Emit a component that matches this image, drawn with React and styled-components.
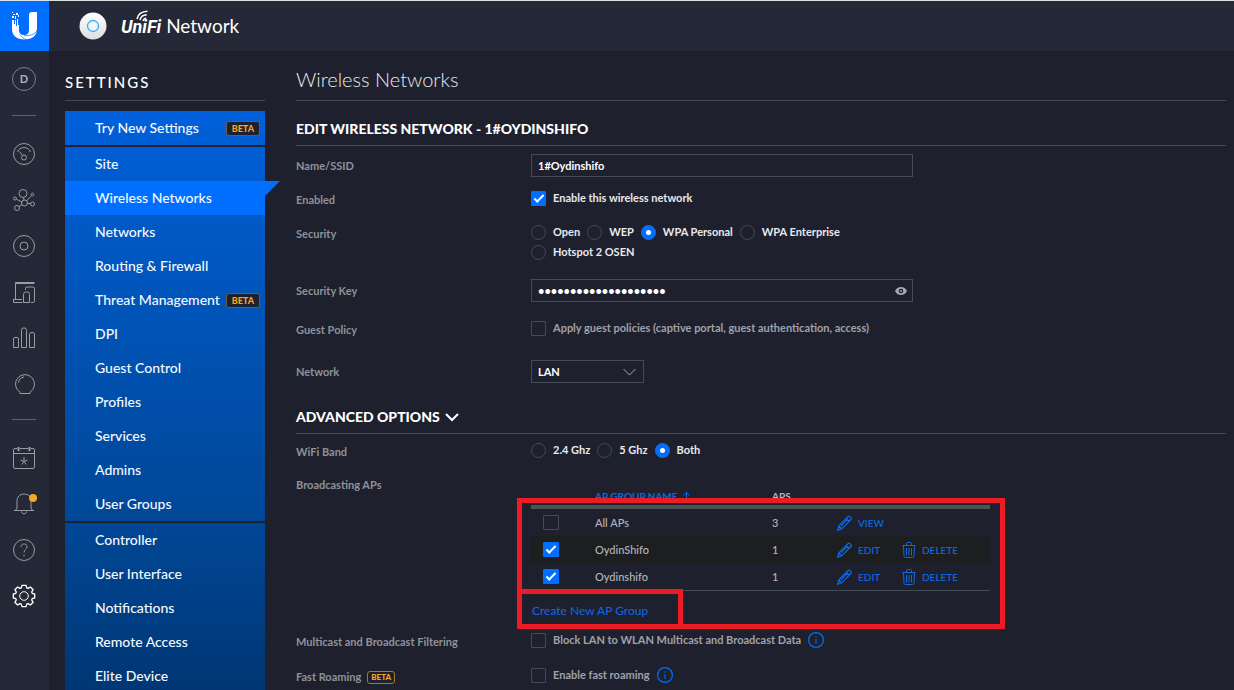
import React, { useState } from 'react';
import styled, { createGlobalStyle, css } from 'styled-components';

const colors = {
  page: '#1e202e',
  bar: '#252836',
  line: '#434c54',
  blue: '#006fff',
  link: '#0a6be6',
  text: '#e8e9ec',
  muted: '#8f9299',
  icon: '#9a9da6',
  orange: '#f5a623',
  red: '#ed1c24',
};

const GlobalStyle = createGlobalStyle`
  *, *::before, *::after {
    box-sizing: border-box;
  }
  body {
    margin: 0;
    background: ${colors.page};
    color: ${colors.text};
    font-family: Lato, 'Open Sans', sans-serif;
    font-size: 11px;
    line-height: 20px;
  }
  button, input, select {
    font: inherit;
    color: inherit;
    margin: 0;
  }
  a {
    color: inherit;
    text-decoration: none;
  }
`;

const StyledShell = styled.div`
  display: flex;
  height: 100vh;
  overflow: hidden;
  border-top: 1px solid #dbe2e4;
`;

const StyledRail = styled.nav`
  display: flex;
  flex-direction: column;
  flex: none;
  width: 49px;
  background: ${colors.bar};
`;

const StyledLogo = styled.a`
  display: grid;
  place-items: center;
  width: 49px;
  height: 50px;
  background: ${colors.blue};
`;

const StyledAvatar = styled.button`
  width: 24px;
  height: 24px;
  margin: 16px 12px 0;
  padding: 0;
  border: 1px solid #7b7e89;
  border-radius: 50%;
  background: none;
  color: #b0b2b9;
  font-size: 11px;
  font-weight: 700;
  line-height: 20px;
`;

const StyledRailLine = styled.hr`
  width: 24px;
  height: 1px;
  margin: ${props => (props.$near ? 12 : 24)}px 12px 15px;
  border: 0;
  background: #5c5f6b;
`;

const StyledRailLink = styled.a`
  display: grid;
  place-items: center;
  width: 48px;
  height: 46px;
  color: ${props => (props.$active ? '#ffffff' : colors.icon)};

  svg {
    width: 24px;
    height: 24px;
    fill: none;
    stroke: currentColor;
    overflow: visible;
  }
`;

const StyledMain = styled.div`
  display: flex;
  flex: 1;
  flex-direction: column;
  min-width: 0;
`;

const StyledHeader = styled.header`
  display: flex;
  align-items: center;
  flex: none;
  height: 50px;
  padding-left: 30px;
  background: ${colors.bar};
`;

const StyledBrand = styled.div`
  display: flex;
  align-items: baseline;
  gap: 5px;
  margin-left: 14px;
  color: #ffffff;
  font-size: 19px;
  line-height: 28px;
`;

const StyledUnifi = styled.span`
  position: relative;
  font-family: Roboto, Lato, sans-serif;
  font-size: 18px;
  font-style: italic;
  font-weight: 700;

  svg {
    position: absolute;
    top: -3px;
    left: 15px;
  }
`;

const StyledColumns = styled.div`
  display: flex;
  flex: 1;
  gap: 31px;
  min-height: 0;
  padding: 0 8px 0 16px;
`;

const StyledAside = styled.aside`
  flex: none;
  width: 200px;
`;

const StyledAsideTitle = styled.h2`
  margin: 0 0 10px;
  padding: 19px 0 6px;
  border-bottom: 1px solid ${colors.line};
  color: #ffffff;
  font-size: 15px;
  font-weight: 500;
  line-height: 24px;
  letter-spacing: 2px;
`;

const StyledMenu = styled.div`
  background: linear-gradient(#0060dc, #005bcb 80px, #004899 400px, #003673);
`;

const StyledMenuGroup = styled.ul`
  margin: 0;
  padding: 0;
  list-style: none;

  & + & {
    border-top: 2px solid ${colors.page};
  }
`;

const StyledMenuLink = styled.a`
  position: relative;
  display: flex;
  align-items: center;
  justify-content: space-between;
  height: 34px;
  padding: 0 5px 0 30px;
  color: #f6f9fd;
  font-size: 14px;
  font-weight: 500;
  white-space: nowrap;

  ${props =>
    props.$active &&
    css`
      background: ${colors.blue};

      &::after {
        content: '';
        position: absolute;
        top: 0;
        left: 100%;
        border-top: 15px solid ${colors.blue};
        border-right: 15px solid transparent;
      }
    `};
`;

const StyledBeta = styled.span`
  display: inline-block;
  padding: 0 ${props => (props.$small ? '3px' : '5px')};
  border: 1px solid ${props => (props.$small ? '#a8762a' : '#6e5a46')};
  border-radius: 3px;
  background: ${colors.page};
  color: ${colors.orange};
  font-size: ${props => (props.$small ? '8px' : '9px')};
  font-weight: 900;
  line-height: ${props => (props.$small ? '11px' : '13px')};
`;

const StyledContent = styled.main`
  flex: 1;
  min-width: 0;
`;

const StyledPageTitle = styled.h1`
  margin: 0 0 16px;
  padding: 13px 0 6px;
  border-bottom: 1px solid ${colors.line};
  font-size: 20px;
  font-weight: 300;
  line-height: 30px;
`;

const StyledSectionTitle = styled.h3`
  display: flex;
  align-items: center;
  gap: 5px;
  margin: 0;
  padding-bottom: 4px;
  border-bottom: 1px solid ${colors.line};
  color: #ffffff;
  font-size: 14px;
  font-weight: 900;
  line-height: 24px;
`;

const StyledRow = styled.div`
  display: grid;
  grid-template-columns: 235px 1fr;
  align-items: start;
  height: ${props => props.$height || 34}px;
  padding-top: ${props => (props.$tight ? 6 : 8)}px;
`;

const StyledRowLabel = styled.label`
  display: flex;
  align-items: center;
  gap: 6px;
  padding-top: 2px;
  color: ${colors.muted};
  font-weight: 700;
`;

const StyledField = styled.div`
  position: relative;
  width: ${props => props.$width || 382}px;
  max-width: 100%;
  height: 23px;

  > svg {
    position: absolute;
    top: 50%;
    right: 8px;
    transform: translateY(-50%);
    pointer-events: none;
  }
`;

const boxed = css`
  display: block;
  width: 100%;
  height: 23px;
  padding: 0 6px;
  border: 1px solid ${colors.line};
  border-radius: 0;
  background: ${colors.page};
  color: #ffffff;
  font-weight: 700;
  outline: none;
`;

const StyledInput = styled.input`
  ${boxed};
`;

const StyledSelect = styled.select`
  ${boxed};
  appearance: none;
`;

const StyledEye = styled.button`
  position: absolute;
  top: 0;
  right: 6px;
  display: grid;
  place-items: center;
  height: 23px;
  padding: 0;
  border: 0;
  background: none;
  color: #a4a6ad;
`;

const StyledOptions = styled.div`
  display: flex;
  flex-wrap: wrap;
  align-items: center;
  column-gap: 7px;
  max-width: 382px;
`;

const StyledOption = styled.label`
  display: flex;
  align-items: center;
  gap: 7px;
  color: ${props => (props.$dim ? '#a0a2a9' : colors.text)};
  font-weight: 700;
  white-space: nowrap;
`;

const StyledCheckbox = styled.input.attrs({ type: 'checkbox' })`
  appearance: none;
  display: grid;
  place-content: center;
  flex: none;
  width: ${props => (props.$large ? 16 : 15)}px;
  height: 15px;
  border: 1px solid ${colors.line};
  border-radius: 1px;

  &:checked {
    border-color: ${colors.blue};
    background: ${colors.blue};
  }
  &:checked::after {
    content: '';
    width: 10px;
    height: 5px;
    border: solid #ffffff;
    border-width: 0 0 2px 2px;
    transform: translateY(-1px) rotate(-45deg);
  }
`;

const StyledRadio = styled.input.attrs({ type: 'radio' })`
  appearance: none;
  display: grid;
  place-content: center;
  flex: none;
  width: 15px;
  height: 15px;
  border: 1px solid ${colors.line};
  border-radius: 50%;

  &:checked {
    border-color: #1f6fce;
    background: ${colors.blue};
  }
  &:checked::after {
    content: '';
    width: 5px;
    height: 5px;
    border-radius: 50%;
    background: #ffffff;
  }
`;

const StyledInfo = styled.button`
  display: grid;
  padding: 0;
  border: 0;
  background: none;
  color: ${colors.blue};
`;

const StyledGroups = styled.div`
  position: relative;
  width: 459px;
`;

const StyledTable = styled.table`
  width: 100%;
  border-collapse: separate;
  border-spacing: 0;
  table-layout: fixed;
  border-bottom: 1px solid ${colors.line};
  color: #b4b6bb;

  th {
    height: 36px;
    padding: 14px 0 0;
    border-bottom: 4px solid #4a5355;
    color: #b4b6bb;
    font-size: 10px;
    font-weight: 700;
    line-height: 18px;
    text-align: left;
  }
  td {
    height: 27px;
    padding: 0;
    font-weight: 500;
  }
  td:first-child {
    padding-left: 12px;
  }
  tbody tr:nth-child(even) {
    background: #1c1e20;
  }
`;

const StyledSort = styled.button`
  display: flex;
  align-items: center;
  gap: 5px;
  padding: 0;
  border: 0;
  background: none;
  color: ${colors.link};
  line-height: 18px;
`;

const StyledAction = styled.button`
  display: flex;
  align-items: center;
  gap: 6px;
  padding: 0;
  border: 0;
  background: none;
  color: ${colors.link};
  font-size: 10px;
`;

const StyledCreate = styled.a`
  display: block;
  margin-top: 10px;
  padding-left: 1px;
  color: ${colors.link};
  font-size: 12px;
`;

// Red frame laid over the AP group list
const StyledFrame = styled.div`
  position: absolute;
  top: ${props => (props.$inner ? 116 : 25)}px;
  left: -14px;
  width: ${props => (props.$inner ? 166 : 488)}px;
  height: ${props => (props.$inner ? 40 : 131)}px;
  border: 5px solid ${colors.red};
  pointer-events: none;
`;

const LogoIcon = () => (
  <svg width="28" height="30" viewBox="0 0 28 30" fill="#fff" aria-hidden="true">
    <path d="M1 1h1v1H1zM5 2h2v2H5zM2 3h2v1H2zM1 5h2v2H1zM4 5h1v3H4zM7 4h1v2H7z" />
    <path d="M1 9h2v4h1V9h1v6h1V8h1v6h1v5c0 3.500 2 5 5.200 5s4.800-1.500 4.800-5V4c0-2 1-3 3-3h5v17c0 6.500-5 10.500-12.500 10.500S1 24.500 1 18z" />
    <path d="M26.500 18c-1 4.500-5 6.700-13.500 6.700M9 23.500c1.500 2.500 3.500 4 7 5.500" fill="none" stroke={colors.blue} strokeWidth=".7" />
  </svg>
);

const DeviceIcon = () => (
  <svg width="28" height="28" viewBox="0 0 28 28" aria-hidden="true">
    <defs>
      <linearGradient id="device" x1="0" y1="0" x2="0" y2="1">
        <stop offset="0" stopColor="#fff" />
        <stop offset="1" stopColor="#dcdee2" />
      </linearGradient>
    </defs>
    <circle cx="14" cy="14" r="13.500" fill="url(#device)" />
    <circle cx="14" cy="14" r="5.500" fill="#eef5fb" stroke="#35b1f5" strokeWidth="1.300" />
  </svg>
);

const WavesIcon = () => (
  <svg width="14" height="14" viewBox="0 0 14 14" fill="none" stroke="#fff" strokeWidth="1.500" aria-hidden="true">
    <path d="M1 9C2 4 6 1.500 11.500 1.300M4 10C4.800 6.500 7 5 10.800 4.800M7 11C7.500 9.200 8.500 8.300 10.200 8.200" />
  </svg>
);

const PencilIcon = () => (
  <svg width="15" height="16" viewBox="0 0 15 16" fill="none" stroke="currentColor" strokeWidth="1.200" aria-hidden="true">
    <path d="M.7 15.200l1.200-4.400L11 1.600c.6-.6 1.300-.6 1.900 0l1 1c.6.6.6 1.300 0 1.900L4.800 13.800zM9.300 3.300l3 3M1.900 10.800l2.900 3M4 10.800l6.500-6.600" />
  </svg>
);

const TrashIcon = () => (
  <svg width="14" height="16" viewBox="0 0 14 16" fill="none" stroke="currentColor" aria-hidden="true">
    <path d="M.5 3.500h13M4.500 3V1.500c0-.6.4-1 1-1h3c.6 0 1 .4 1 1V3M1.500 3.500l.5 10.500c0 1 .5 1.500 1.500 1.500h7c1 0 1.500-.5 1.500-1.500l.5-10.500M4.500 6v7.500M7 6v7.500M9.500 6v7.500" />
  </svg>
);

const InfoButton = () => (
  <StyledInfo type="button" aria-label="More information">
    <svg width="16" height="16" viewBox="0 0 16 16" fill="none" stroke="currentColor">
      <circle cx="8" cy="8" r="7.400" strokeWidth="1.200" />
      <path d="M8 7v5M8 4.500v1.200" />
    </svg>
  </StyledInfo>
);

const railTop = [
  {
    name: 'Dashboard',
    icon: (
      <>
        <circle cx="12" cy="12" r="10.500" />
        <circle cx="12" cy="15.500" r="2.500" />
        <path d="M10.500 13.500L7.500 9.500M5.500 10a7 7 0 0 1 13 0" />
      </>
    ),
  },
  {
    name: 'Map',
    icon: (
      <>
        <circle cx="11" cy="5.500" r="4" />
        <circle cx="12.500" cy="15" r="3" />
        <circle cx="5" cy="20" r="2.500" />
        <circle cx="20.500" cy="16" r="2" />
        <circle cx="3" cy="10.500" r="1.500" />
        <circle cx="20.500" cy="6.500" r="1.300" />
        <path d="M11.500 9.500l.5 2.500M10 16.500l-3 2M15.500 15.500h3M4.500 11.300l5.500 2.700M19.500 7.500l-5 5.500" />
      </>
    ),
  },
  {
    name: 'Devices',
    icon: (
      <>
        <circle cx="12" cy="12" r="10.500" />
        <circle cx="12" cy="12" r="4" />
      </>
    ),
  },
  {
    name: 'Clients',
    icon: (
      <path d="M22.500 3.500h-18q-1 0-1 1.500v14M22.500 2.500H3.500v3M1 19.500h9M1.500 19.500v3h9M13.500 10V8.500q0-1.500 1.500-1.500h6q1.500 0 1.500 1.500v12q0 2-1.500 2h-2M11.500 22.500v-8q0-2.500 2-2.500h2q2 0 2 2.500v8z" />
    ),
  },
  {
    name: 'Statistics',
    icon: (
      <path d="M1.500 21.500v-8.500q0-1.500 1.500-1.500h2q1.500 0 1.500 1.500v8.500zM9.500 21.500v-17q0-2.500 1.500-2.500h2q1.500 0 1.500 2.500v17zM17.500 21.500v-12.500q0-2.500 1.500-2.500h2q1.500 0 1.500 2.500v12.500z" />
    ),
  },
  {
    name: 'Insights',
    icon: <path d="M8 21.500v-1.300a9.500 9.500 0 1 1 10 0v1.300zM6.500 10.500c.3-3 2.300-5 5.500-5.500" />,
  },
];

const railBottom = [
  {
    name: 'Events',
    icon: (
      <>
        <path d="M5 2.500H3q-1.500 0-1.500 1.500v17q0 1.500 1.500 1.500h18q1.500 0 1.500-1.500V4q0-1.500-1.500-1.500h-2M8 2.500h8M1.500 7.500h21" />
        <path d="M6.500 1v4M17.500 1v4" strokeWidth="2" />
        <path d="M12 11v4.500M8.500 14l3.500 1.500 3.500-1.500M9.800 18.500l2.200-3 2.200 3" />
      </>
    ),
  },
  {
    name: 'Alerts',
    icon: (
      <>
        <path d="M2 18.500h20M3.500 18.500L5 16V9c0-4 2.500-7 7-7s7 3 7 7v7l1.500 2.500M9.500 19.500c0 3 5 3 5 0" />
        <circle cx="21" cy="6" r="4" fill={colors.orange} stroke="none" />
      </>
    ),
  },
  {
    name: 'Help',
    icon: (
      <>
        <circle cx="12" cy="12" r="10.500" />
        <path d="M9 9c0-4 6-4 6-.2 0 2.700-3 2.700-3 5.700M12 16.800v1.700" />
      </>
    ),
  },
  {
    name: 'Settings',
    active: true,
    icon: (
      <>
        <circle cx="12" cy="12" r="4.300" />
        <path
          strokeWidth="1.300"
          d="M10 1.300h4l.7 2.500 1.300.6 2.400-1.400 2.700 2.700-1.400 2.400.6 1.300 2.400.7v3.800l-2.400.7-.6 1.300 1.400 2.400-2.700 2.700-2.400-1.400-1.300.6-.7 2.500h-4l-.7-2.500-1.300-.6-2.400 1.400-2.700-2.700 1.400-2.400-.6-1.300-2.400-.7v-3.800l2.400-.7.6-1.300-1.400-2.400 2.700-2.700L8 4.400l1.300-.6z"
        />
      </>
    ),
  },
];

const menu = [
  [{ name: 'Try New Settings', beta: true }],
  [
    { name: 'Site' },
    { name: 'Wireless Networks', active: true },
    { name: 'Networks' },
    { name: 'Routing & Firewall' },
    { name: 'Threat Management', beta: true },
    { name: 'DPI' },
    { name: 'Guest Control' },
    { name: 'Profiles' },
    { name: 'Services' },
    { name: 'Admins' },
    { name: 'User Groups' },
  ],
  [
    { name: 'Controller' },
    { name: 'User Interface' },
    { name: 'Notifications' },
    { name: 'Remote Access' },
    { name: 'Elite Device' },
  ],
];

const apGroups = [
  { name: 'All APs', aps: 3, locked: true },
  { name: 'OydinShifo', aps: 1 },
  { name: 'Oydinshifo', aps: 1 },
];

const RailLinks = ({ items }) =>
  items.map(({ name, icon, active }) => (
    <StyledRailLink key={name} href="#" aria-label={name} $active={active}>
      <svg viewBox="0 0 24 24">{icon}</svg>
    </StyledRailLink>
  ));

const RadioGroup = ({ name, label, options, initial }) => {
  const [value, setValue] = useState(initial);

  return (
    <StyledOptions role="radiogroup" aria-label={label}>
      {options.map(option => (
        <StyledOption key={option}>
          <StyledRadio name={name} checked={value === option} onChange={() => setValue(option)} />
          {option}
        </StyledOption>
      ))}
    </StyledOptions>
  );
};

const ApGroups = () => (
  <StyledGroups>
    <StyledTable>
      <colgroup>
        <col width="64" />
        <col width="177" />
        <col width="65" />
        <col width="65" />
        <col />
      </colgroup>
      <thead>
        <tr>
          <th aria-label="Selected" />
          <th>
            <StyledSort type="button">
              AP GROUP NAME
              <svg width="7" height="9" viewBox="0 0 7 9" fill="none" stroke="currentColor">
                <path d="M3.500 9V1M.5 3.500l3-3 3 3" />
              </svg>
            </StyledSort>
          </th>
          <th>APS</th>
          <th colSpan={2} aria-label="Actions" />
        </tr>
      </thead>
      <tbody>
        {apGroups.map(({ name, aps, locked }) => (
          <tr key={name}>
            <td>
              <StyledCheckbox $large aria-label={name} defaultChecked={!locked} />
            </td>
            <td>{name}</td>
            <td>{aps}</td>
            <td>
              <StyledAction type="button">
                <PencilIcon />
                {locked ? 'VIEW' : 'EDIT'}
              </StyledAction>
            </td>
            <td>
              {!locked && (
                <StyledAction type="button">
                  <TrashIcon />
                  DELETE
                </StyledAction>
              )}
            </td>
          </tr>
        ))}
      </tbody>
    </StyledTable>
    <StyledCreate href="#">Create New AP Group</StyledCreate>
    <StyledFrame />
    <StyledFrame $inner />
  </StyledGroups>
);

const App = () => {
  const [showKey, setShowKey] = useState(false);

  return (
    <>
      <GlobalStyle />
      <StyledShell>
        <StyledRail>
          <StyledLogo href="#" aria-label="Home">
            <LogoIcon />
          </StyledLogo>
          <StyledAvatar type="button">D</StyledAvatar>
          <StyledRailLine />
          <RailLinks items={railTop} />
          <StyledRailLine $near />
          <RailLinks items={railBottom} />
        </StyledRail>

        <StyledMain>
          <StyledHeader>
            <DeviceIcon />
            <StyledBrand>
              <StyledUnifi>
                UniFi
                <WavesIcon />
              </StyledUnifi>
              <span>Network</span>
            </StyledBrand>
          </StyledHeader>

          <StyledColumns>
            <StyledAside>
              <StyledAsideTitle>SETTINGS</StyledAsideTitle>
              <StyledMenu>
                {menu.map(group => (
                  <StyledMenuGroup key={group[0].name}>
                    {group.map(({ name, beta, active }) => (
                      <li key={name}>
                        <StyledMenuLink href="#" $active={active}>
                          {name}
                          {beta && <StyledBeta>BETA</StyledBeta>}
                        </StyledMenuLink>
                      </li>
                    ))}
                  </StyledMenuGroup>
                ))}
              </StyledMenu>
            </StyledAside>

            <StyledContent>
              <StyledPageTitle>Wireless Networks</StyledPageTitle>

              <StyledSectionTitle>EDIT WIRELESS NETWORK - 1#OYDINSHIFO</StyledSectionTitle>
              <StyledRow>
                <StyledRowLabel htmlFor="ssid">Name/SSID</StyledRowLabel>
                <StyledField>
                  <StyledInput id="ssid" type="text" defaultValue="1#Oydinshifo" />
                </StyledField>
              </StyledRow>
              <StyledRow>
                <StyledRowLabel htmlFor="enabled">Enabled</StyledRowLabel>
                <StyledOption>
                  <StyledCheckbox id="enabled" defaultChecked />
                  Enable this wireless network
                </StyledOption>
              </StyledRow>
              <StyledRow $height={57}>
                <StyledRowLabel as="span">Security</StyledRowLabel>
                <RadioGroup
                  name="security"
                  label="Security"
                  options={['Open', 'WEP', 'WPA Personal', 'WPA Enterprise', 'Hotspot 2 OSEN']}
                  initial="WPA Personal"
                />
              </StyledRow>
              <StyledRow $height={39}>
                <StyledRowLabel htmlFor="key">Security Key</StyledRowLabel>
                <StyledField>
                  <StyledInput
                    id="key"
                    type={showKey ? 'text' : 'password'}
                    defaultValue="oydinshifo-wifi-2020"
                  />
                  <StyledEye type="button" aria-label="Show key" onClick={() => setShowKey(!showKey)}>
                    <svg width="12" height="8" viewBox="0 0 12 8" fill="currentColor">
                      <path
                        fillRule="evenodd"
                        d="M0 4C1.200 1.400 3.300 0 6 0s4.800 1.400 6 4c-1.200 2.600-3.300 4-6 4S1.200 6.600 0 4zm6-2.300a2.300 2.300 0 1 0 0 4.600 2.300 2.300 0 0 0 0-4.600z"
                      />
                      <circle cx="6" cy="4" r="1" />
                    </svg>
                  </StyledEye>
                </StyledField>
              </StyledRow>
              <StyledRow $height={42}>
                <StyledRowLabel htmlFor="guest">Guest Policy</StyledRowLabel>
                <StyledOption $dim>
                  <StyledCheckbox id="guest" />
                  Apply guest policies (captive portal, guest authentication, access)
                </StyledOption>
              </StyledRow>
              <StyledRow $height={53}>
                <StyledRowLabel htmlFor="network">Network</StyledRowLabel>
                <StyledField $width={113}>
                  <StyledSelect id="network">
                    <option>LAN</option>
                  </StyledSelect>
                  <svg width="13" height="8" viewBox="0 0 13 8" fill="none" stroke="#a4a6ad">
                    <path d="M.5 1l6 6 6-6" />
                  </svg>
                </StyledField>
              </StyledRow>

              <StyledSectionTitle>
                ADVANCED OPTIONS
                <svg width="14" height="9" viewBox="0 0 14 9" fill="none" stroke="#fff" strokeWidth="2">
                  <path d="M1 1l6 6 6-6" />
                </svg>
              </StyledSectionTitle>
              <StyledRow $tight $height={31}>
                <StyledRowLabel as="span">WiFi Band</StyledRowLabel>
                <RadioGroup
                  name="band"
                  label="WiFi Band"
                  options={['2.4 Ghz', '5 Ghz', 'Both']}
                  initial="Both"
                />
              </StyledRow>
              <StyledRow $height={157}>
                <StyledRowLabel as="span">Broadcasting APs</StyledRowLabel>
                <ApGroups />
              </StyledRow>
              <StyledRow $height={35}>
                <StyledRowLabel htmlFor="multicast">Multicast and Broadcast Filtering</StyledRowLabel>
                <StyledOptions>
                  <StyledOption $dim>
                    <StyledCheckbox id="multicast" />
                    Block LAN to WLAN Multicast and Broadcast Data
                  </StyledOption>
                  <InfoButton />
                </StyledOptions>
              </StyledRow>
              <StyledRow>
                <StyledRowLabel htmlFor="roaming">
                  Fast Roaming
                  <StyledBeta $small>BETA</StyledBeta>
                </StyledRowLabel>
                <StyledOptions>
                  <StyledOption $dim>
                    <StyledCheckbox id="roaming" />
                    Enable fast roaming
                  </StyledOption>
                  <InfoButton />
                </StyledOptions>
              </StyledRow>
            </StyledContent>
          </StyledColumns>
        </StyledMain>
      </StyledShell>
    </>
  );
};

export default App;
